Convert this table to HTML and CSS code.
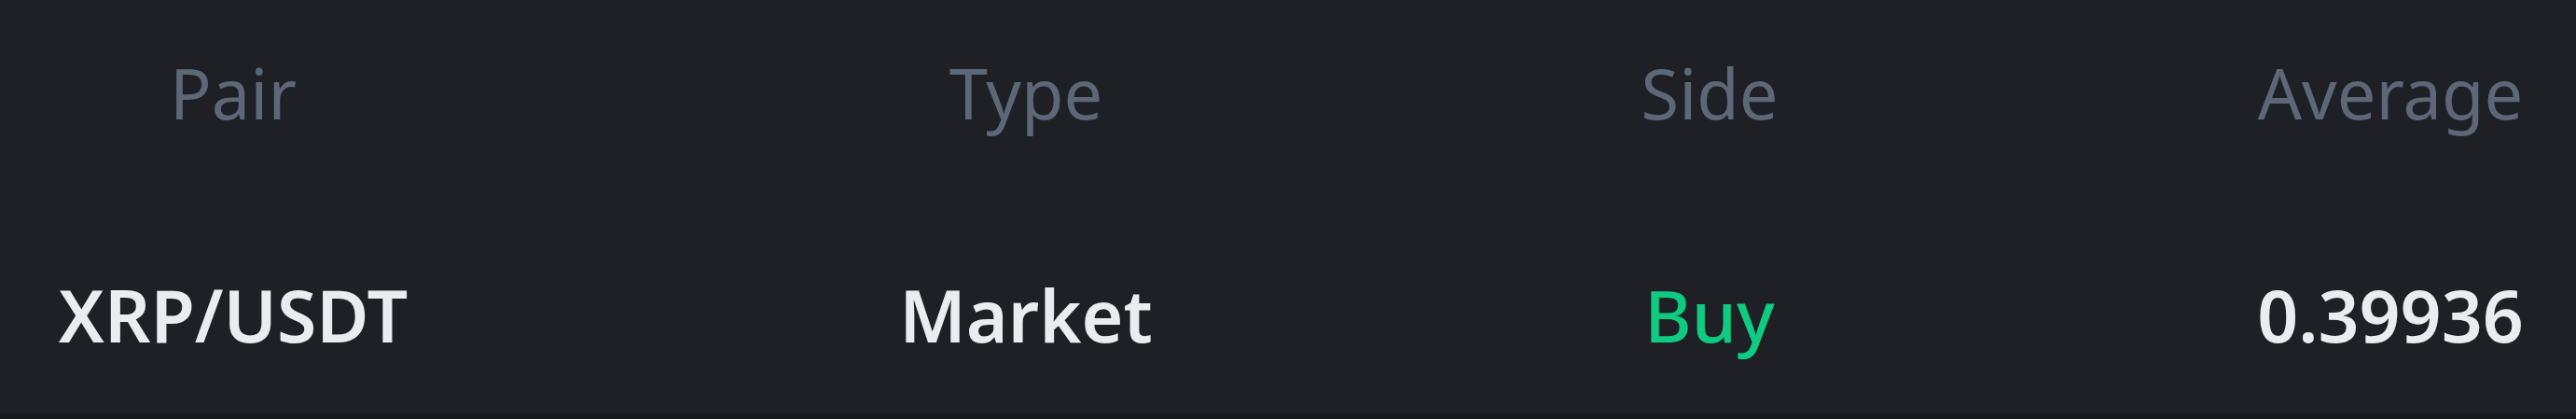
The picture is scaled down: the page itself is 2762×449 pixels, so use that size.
FILE: index.html
```html
<!DOCTYPE html>
<html lang="en">
<head>
<meta charset="utf-8">
<title>Order</title>
<link rel="stylesheet" href="styles.css">
</head>
<body>
<div class="table">
  <div class="row head">
    <div class="cell">Pair</div>
    <div class="cell">Type</div>
    <div class="cell">Side</div>
    <div class="cell last">Average</div>
  </div>
  <div class="row body">
    <div class="cell">XRP/USDT</div>
    <div class="cell">Market</div>
    <div class="cell buy">Buy</div>
    <div class="cell last">0.39936</div>
  </div>
</div>
</body>
</html>
```

FILE: styles.css
```css
html, body {
  margin: 0;
  padding: 0;
  background: #1e2026;
}
body {
  width: 2762px;
  height: 449px;
  overflow: hidden;
  font-family: "Noto Sans", "Open Sans", sans-serif;
}
.table {
  height: 449px;
  box-sizing: border-box;
  border-bottom: 6px solid #17191d;
}
.row {
  display: grid;
  grid-template-columns: 500px 1200px 266px 398px 398px;
  text-align: center;
  white-space: nowrap;
}
.cell.last {
  grid-column: 5;
}
.head {
  padding-top: 56px;
  height: 292px;
  box-sizing: border-box;
  font-size: 74px;
  line-height: 88.8px;
  font-weight: 400;
  color: #5d6778;
}
.body {
  font-size: 77px;
  line-height: 92.4px;
  font-weight: 600;
  color: #eaecef;
}
.buy {
  color: #0ecb81;
  font-weight: 500;
}
```
